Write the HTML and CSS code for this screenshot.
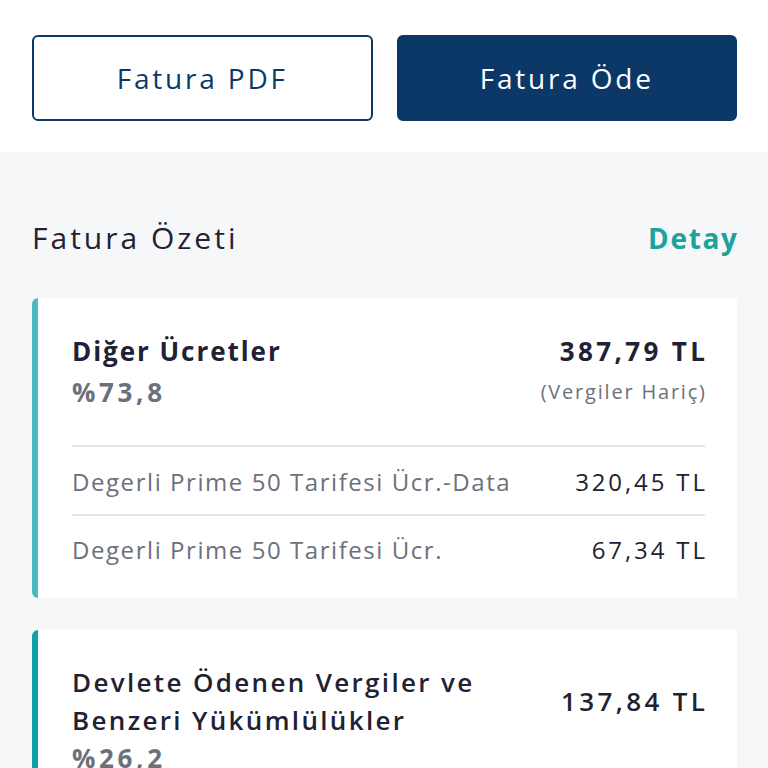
FILE: index.html
```html
<!DOCTYPE html>
<html lang="tr">
<head>
  <meta charset="UTF-8" />
  <title>Fatura Özeti</title>
  <link rel="stylesheet" href="styles.css">
</head>
<body>
  <header class="actions">
    <button class="btn btn-outline">Fatura PDF</button>
    <button class="btn btn-primary">Fatura Öde</button>
  </header>

  <main class="summary">
    <div class="summary-head">
      <h1>Fatura Özeti</h1>
      <a href="#" class="detail-link">Detay</a>
    </div>

    <section class="card card-light">
      <div class="card-top">
        <div>
          <h2>Diğer Ücretler</h2>
          <p class="percent">%73,8</p>
        </div>
        <div class="amount">
          <strong>387,79 TL</strong>
          <small>(Vergiler Hariç)</small>
        </div>
      </div>
      <ul class="lines">
        <li><span>Degerli Prime 50 Tarifesi Ücr.-Data</span><b>320,45 TL</b></li>
        <li><span>Degerli Prime 50 Tarifesi Ücr.</span><b>67,34 TL</b></li>
      </ul>
    </section>

    <section class="card card-dark">
      <div class="card-top centered">
        <h2 class="tax-title">Devlete Ödenen Vergiler ve Benzeri Yükümlülükler</h2>
        <div class="amount">
          <strong class="light">137,84 TL</strong>
        </div>
      </div>
      <p class="percent tight">%26,2</p>
    </section>
  </main>
</body>
</html>
```

FILE: styles.css
```css
:root {
  --navy: #0c3868;
  --ink: #1f2233;
  --grey: #6c707c;
  --teal: #1ba39c;
  --teal-light: #4db9bf;
  --teal-dark: #12a0a8;
  --bg: #f6f7f9;
  --line: #e3e4e7;
}

* {
  margin: 0;
  padding: 0;
  box-sizing: border-box;
}

body {
  font-family: 'Open Sans', 'Noto Sans', sans-serif;
  background-color: var(--bg);
  color: var(--ink);
  letter-spacing: 0.07em;
  height: 768px;
  overflow: hidden;
}

.actions {
  background-color: #fff;
  display: flex;
  gap: 24px;
  padding: 35px 31px 31px 32px;
}

.btn {
  flex: 1;
  height: 86px;
  border-radius: 6px;
  font-family: inherit;
  font-size: 28px;
  letter-spacing: 0.1em;
  border: 2px solid var(--navy);
}

.btn-outline {
  background-color: #fff;
  color: var(--navy);
}

.btn-primary {
  background-color: var(--navy);
  color: #fff;
}

.summary {
  padding: 66px 31px 0 32px;
}

.summary-head {
  display: flex;
  justify-content: space-between;
  align-items: center;
  height: 40px;
  margin-bottom: 40px;
}

.summary-head h1 {
  font-size: 30px;
  font-weight: 400;
  line-height: 40px;
  letter-spacing: 0.1em;
  color: var(--ink);
}

.detail-link {
  color: var(--teal);
  font-size: 28px;
  font-weight: 700;
  line-height: 40px;
  letter-spacing: 0.06em;
  margin-right: -0.06em;
  text-decoration: none;
}

.card {
  background-color: #fff;
  border-left: 6px solid var(--teal-light);
  border-radius: 6px 0 0 6px;
  padding: 35px 32px 33px 34px;
  margin-bottom: 32px;
}

.card-dark {
  border-left-color: var(--teal-dark);
  padding-top: 33px;
}

.card-top {
  display: flex;
  justify-content: space-between;
  align-items: flex-start;
}

.card-top.centered {
  align-items: center;
}

.card h2 {
  font-size: 26px;
  font-weight: 700;
  line-height: 36px;
  letter-spacing: 0.075em;
}

.card .tax-title {
  font-weight: 600;
  max-width: 440px;
  line-height: 38px;
  letter-spacing: 0.09em;
}

.percent {
  font-size: 26px;
  font-weight: 700;
  color: var(--grey);
  line-height: 38px;
  letter-spacing: 0.14em;
  margin-top: 4px;
}

.percent.tight {
  margin-top: 0;
}

.amount {
  text-align: right;
  display: flex;
  flex-direction: column;
}

.amount strong {
  font-size: 26px;
  line-height: 36px;
  letter-spacing: 0.13em;
  margin-right: -0.13em;
}

.amount strong.light {
  font-weight: 600;
}

.amount small {
  font-size: 20px;
  color: var(--grey);
  line-height: 38px;
  letter-spacing: 0.09em;
  margin: 4px -0.09em 0 0;
}

.lines {
  list-style: none;
  margin-top: 34px;
}

.lines li {
  display: flex;
  justify-content: space-between;
  border-top: 2px solid var(--line);
  font-size: 24px;
  line-height: 30px;
  padding: 20px 0 17px;
}

.lines li + li {
  padding: 19px 0 0;
}

.lines span {
  color: var(--grey);
  letter-spacing: 0.065em;
}

.lines b {
  font-weight: 500;
  letter-spacing: 0.12em;
  margin-right: -0.12em;
}
```
